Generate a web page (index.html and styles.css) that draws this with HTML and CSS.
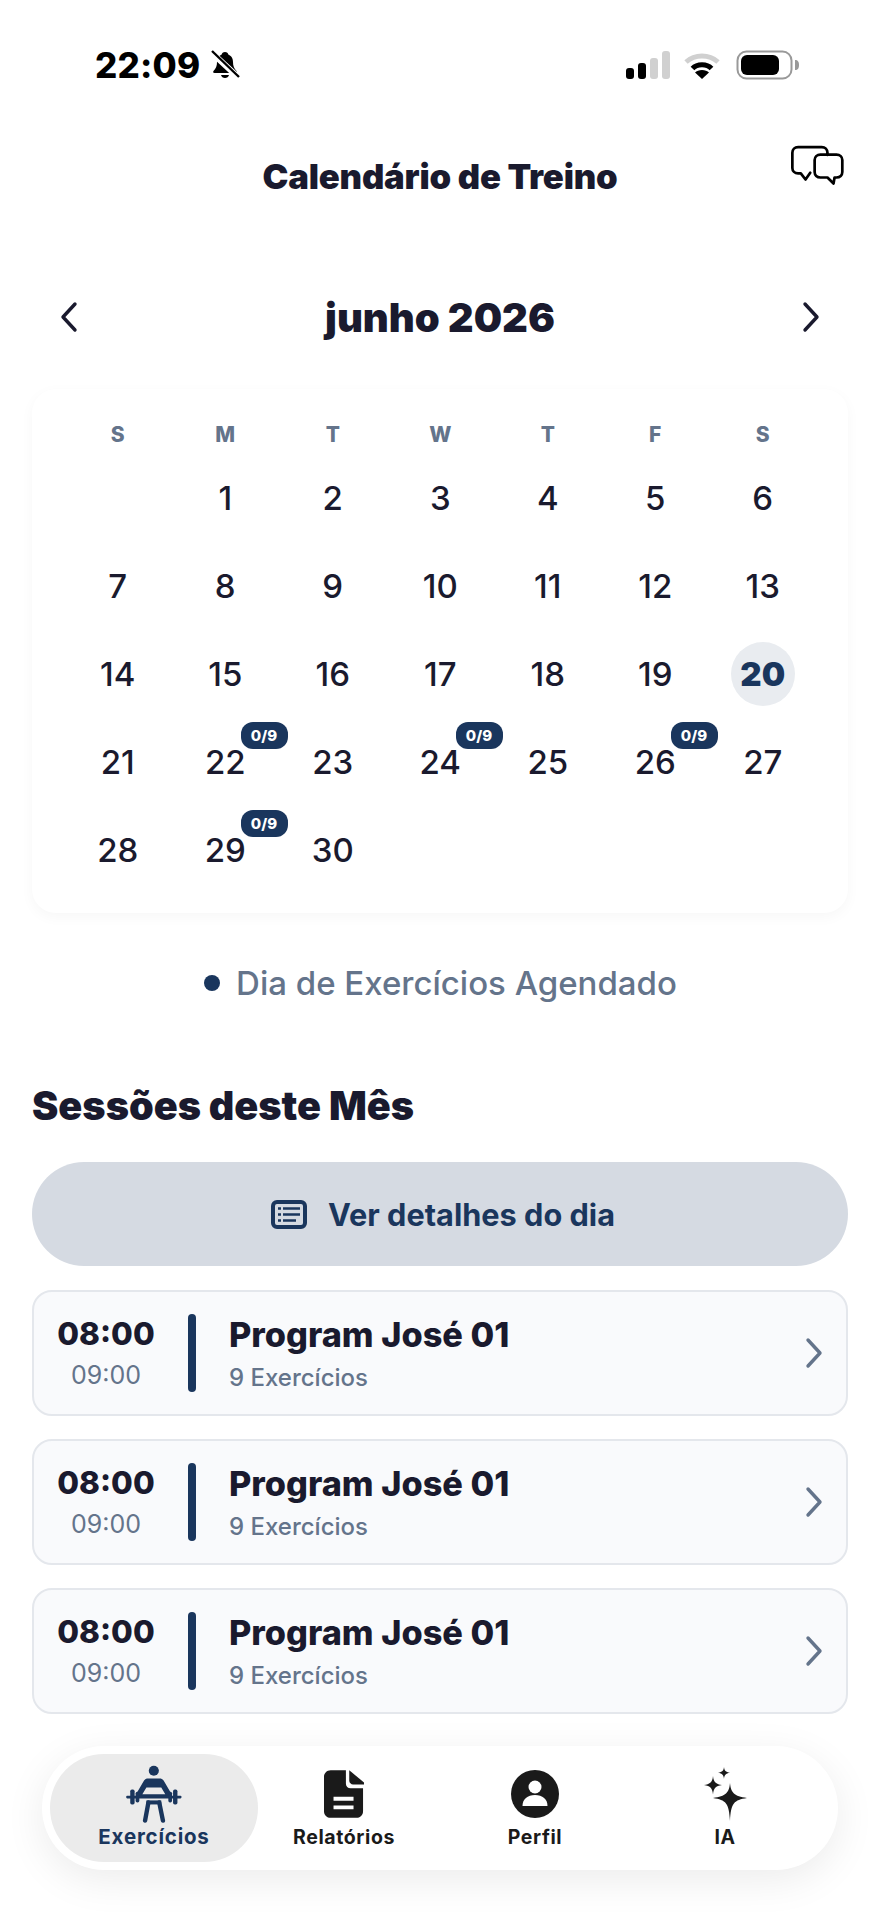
FILE: index.html
```html
<!DOCTYPE html>
<html lang="pt">
<head>
<meta charset="utf-8">
<title>Calendário de Treino</title>
<link rel="stylesheet" href="styles.css">
</head>
<body>
<div class="screen">
  <div class="status">
    <div class="status-left">
      <span class="clock">22:09</span>
      <svg class="bell" width="30" height="30" viewBox="0 0 30 30"><path d="M15 2c-2 0-3 1-3.300 2.500C8 6 7 9 7 12c0 4-1 6-3.500 9-.8 1-.2 2 1 2h21c1.200 0 1.800-1 1-2-2.500-3-3.500-5-3.500-9 0-3-1-6-4.700-7.500C18 3 17 2 15 2z" fill="#000"/><path d="M11 25h8c-.5 2-2 3-4 3s-3.500-1-4-3z" fill="#000"/><path d="M1 2l28 26" stroke="#fff" stroke-width="6"/><path d="M2 1l27 26" stroke="#000" stroke-width="2.400"/></svg>
    </div>
    <div class="status-right">
      <svg width="45" height="28" viewBox="0 0 45 28"><rect x="0" y="17" width="8" height="11" rx="3" fill="#000"/><rect x="12" y="12" width="8" height="16" rx="3" fill="#000"/><rect x="24" y="7" width="8" height="21" rx="3" fill="#d0d0d0"/><rect x="36" y="0" width="8" height="28" rx="3" fill="#d0d0d0"/></svg>
      <svg class="wifi" width="38" height="28" viewBox="0 0 38 28"><path d="M3 11C12 3 26 3 35 11" fill="none" stroke="#d0d0d0" stroke-width="5"/><path d="M9.500 17.500C14 12.500 24 12.500 28.500 17.500" fill="none" stroke="#000" stroke-width="5"/><path d="M19 28l-7-6.500C15 18 23 18 26 21.500z" fill="#000"/></svg>
      <svg class="battery" width="64" height="30" viewBox="0 0 64 30"><rect x="1.500" y="1.500" width="54" height="27" rx="9" fill="none" stroke="#999" stroke-width="2"/><rect x="5" y="5" width="38" height="20" rx="6" fill="#000"/><path d="M59 10c3 0 4 2 4 5s-1 5-4 5z" fill="#999"/></svg>
    </div>
  </div>

  <header class="topbar">
    <h1 class="title">Calendário de Treino</h1>
    <svg class="chat" width="54" height="43" viewBox="540 338 160 127"><path d="M600 426l-14 20-14-18h-8c-10 0-17-7-17-16v-45c0-10 7-17 17-17h70c10 0 17 7 17 17v6M630 372h48c10 0 17 7 17 16v36c0 9-7 16-17 16h-6l-3 18-18-18h-21c-10 0-17-7-17-16v-36c0-9 7-16 17-16z" fill="none" stroke="#000" stroke-width="8" stroke-linejoin="round" stroke-linecap="round"/></svg>
  </header>

  <div class="month">
    <svg width="20" height="32" viewBox="0 0 20 32"><path d="M16 3L4 16l12 13" fill="none" stroke="#1a1a2e" stroke-width="3.400" stroke-linecap="round" stroke-linejoin="round"/></svg>
    <h2 class="month-name">junho 2026</h2>
    <svg width="20" height="32" viewBox="0 0 20 32"><path d="M4 3l12 13L4 29" fill="none" stroke="#1a1a2e" stroke-width="3.400" stroke-linecap="round" stroke-linejoin="round"/></svg>
  </div>

  <section class="calendar">
    <div class="weekdays"><span>S</span><span>M</span><span>T</span><span>W</span><span>T</span><span>F</span><span>S</span></div>
    <div class="days">
      <span class="day"></span><span class="day">1</span><span class="day">2</span><span class="day">3</span><span class="day">4</span><span class="day">5</span><span class="day">6</span>
      <span class="day">7</span><span class="day">8</span><span class="day">9</span><span class="day">10</span><span class="day">11</span><span class="day">12</span><span class="day">13</span>
      <span class="day">14</span><span class="day">15</span><span class="day">16</span><span class="day">17</span><span class="day">18</span><span class="day">19</span><span class="day"><b class="today">20</b></span>
      <span class="day">21</span><span class="day">22<i class="badge">0/9</i></span><span class="day">23</span><span class="day">24<i class="badge">0/9</i></span><span class="day">25</span><span class="day">26<i class="badge">0/9</i></span><span class="day">27</span>
      <span class="day">28</span><span class="day">29<i class="badge">0/9</i></span><span class="day">30</span>
    </div>
  </section>

  <div class="legend"><span class="dot"></span><span>Dia de Exercícios Agendado</span></div>

  <h2 class="section-title">Sessões deste Mês</h2>

  <button class="details">
    <svg width="36" height="29" viewBox="0 0 36 29"><rect x="2" y="2" width="32" height="25" rx="4" fill="#d5dae2" stroke="#1a365d" stroke-width="4"/><path d="M7 8.500h3M12 8.500h17M7 14.500h3M12 14.500h17M7 20.500h3M12 20.500h13" stroke="#1a365d" stroke-width="2.600"/></svg>
    <span>Ver detalhes do dia</span>
  </button>

  <div class="sessions">
    <article class="session">
      <div class="times"><strong>08:00</strong><span>09:00</span></div>
      <div class="bar"></div>
      <div class="info"><strong>Program José 01</strong><span>9 Exercícios</span></div>
      <svg class="go" width="20" height="32" viewBox="0 0 20 32"><path d="M4 3l12 13L4 29" fill="none" stroke="#64748b" stroke-width="3.400" stroke-linecap="round" stroke-linejoin="round"/></svg>
    </article>
    <article class="session">
      <div class="times"><strong>08:00</strong><span>09:00</span></div>
      <div class="bar"></div>
      <div class="info"><strong>Program José 01</strong><span>9 Exercícios</span></div>
      <svg class="go" width="20" height="32" viewBox="0 0 20 32"><path d="M4 3l12 13L4 29" fill="none" stroke="#64748b" stroke-width="3.400" stroke-linecap="round" stroke-linejoin="round"/></svg>
    </article>
    <article class="session">
      <div class="times"><strong>08:00</strong><span>09:00</span></div>
      <div class="bar"></div>
      <div class="info"><strong>Program José 01</strong><span>9 Exercícios</span></div>
      <svg class="go" width="20" height="32" viewBox="0 0 20 32"><path d="M4 3l12 13L4 29" fill="none" stroke="#64748b" stroke-width="3.400" stroke-linecap="round" stroke-linejoin="round"/></svg>
    </article>
  </div>

  <nav class="tabs">
    <div class="tab active">
      <div class="icon"><svg width="56" height="58" viewBox="18 15 165 172"><circle cx="100" cy="32" r="15" fill="#1a365d"/><path fill-rule="evenodd" d="M82 55h36c5 0 8 2 11 6l23 39-6 10H54l-6-10 23-39c3-4 6-6 11-6zM78 82l-12 20h68l-12-20z" fill="#1a365d"/><rect x="18" y="106" width="164" height="8" rx="3" fill="#1a365d"/><rect x="30" y="88" width="13" height="44" rx="5" fill="#1a365d"/><rect x="46" y="94" width="11" height="32" rx="5" fill="#1a365d"/><rect x="157" y="88" width="13" height="44" rx="5" fill="#1a365d"/><rect x="143" y="94" width="11" height="32" rx="5" fill="#1a365d"/><path d="M84 126l-10 54M116 126l11 54" stroke="#1a365d" stroke-width="13" stroke-linecap="round"/><path d="M78 120h44v12H78z" fill="#1a365d"/></svg></div>
      <span>Exercícios</span>
    </div>
    <div class="tab">
      <div class="icon"><svg width="40" height="50" viewBox="0 0 42 50"><path d="M7 0h16v14c0 3 2 5 5 5h13v24c0 4-3 7-7 7H7c-4 0-7-3-7-7V7c0-4 3-7 7-7z" fill="#1a1a1a"/><path d="M23 0l18 15H27c-2 0-4-2-4-4z" fill="#1a1a1a" transform="translate(3.500 0)"/><path d="M10 30h21M10 39h21" stroke="#fff" stroke-width="4"/></svg></div>
      <span>Relatórios</span>
    </div>
    <div class="tab">
      <div class="icon"><svg width="48" height="48" viewBox="0 0 48 48"><circle cx="24" cy="24" r="24" fill="#1a1a1a"/><circle cx="24" cy="17" r="6.500" fill="#fff"/><path d="M11.500 36c0-7 5-11 12.500-11s12.500 4 12.500 11z" fill="#fff"/></svg></div>
      <span>Perfil</span>
    </div>
    <div class="tab">
      <div class="icon"><svg width="44" height="54" viewBox="0 0 44 54"><path d="M27 16c1 10 4 13 17 15-13 2-16 5-17 23-1-18-4-21-17-23 13-2 16-5 17-15z" fill="#1a1a1a"/><path d="M10 9c.6 6 2.500 8 9 9-6.500 1-8.400 3-9 9.500-.6-6.500-2.500-8.500-9-9.500 6.500-1 8.400-3 9-9z" fill="#1a1a1a"/><path d="M21 0c.4 3.500 1.500 5 6 5.800-4.500.8-5.600 2.200-6 6.200-.4-4-1.500-5.400-6-6.200 4.500-.8 5.600-2.300 6-5.800z" fill="#1a1a1a"/></svg></div>
      <span>IA</span>
    </div>
  </nav>
</div>
</body>
</html>
```
FILE: styles.css
```css
* { box-sizing: border-box; }
html, body { margin: 0; padding: 0; background: #fff; }
.screen {
  width: 880px;
  height: 1912px;
  overflow: hidden;
  font-family: Inter, "Liberation Sans", sans-serif;
  color: #1a1a2e;
  padding: 0 32px;
  display: flex;
  flex-direction: column;
}
.status {
  height: 50px;
  margin-top: 40px;
  padding: 0 0 0 63px;
  display: flex;
  justify-content: space-between;
  align-items: center;
}
.status-left { display: flex; align-items: center; gap: 10px; }
.clock { font-size: 35px; font-weight: 800; color: #000; letter-spacing: .2px; }
.status-right { display: flex; align-items: center; gap: 15px; margin-right: 48px; }
.wifi { margin-left: -3px; }
.topbar {
  position: relative;
  height: 100px;
  margin-top: 36px;
  display: flex;
  justify-content: center;
}
.title { margin: 0; font-size: 34.700px; font-weight: 900; line-height: 100px; letter-spacing: -.2px; }
.chat { position: absolute; right: 4px; top: 17px; }
.month {
  height: 64px;
  margin-top: 59px;
  padding: 0 27px 0 27px;
  display: flex;
  justify-content: space-between;
  align-items: center;
}
.month-name { margin: 0; font-size: 40px; font-weight: 900; }
.calendar {
  height: 524px;
  margin-top: 40px;
  border-radius: 24px;
  background: #fff;
  box-shadow: 0 4px 14px rgba(0, 0, 0, .035);
  padding: 24px 31px 0;
}
.weekdays, .days {
  display: grid;
  grid-template-columns: repeat(7, 107.500px);
  margin: 0 1px;
}
.weekdays { height: 41px; font-size: 21px; font-weight: 800; color: #64748b; text-align: center; line-height: 44px; }
.days { grid-auto-rows: 88px; }
.day {
  position: relative;
  display: flex;
  align-items: center;
  justify-content: center;
  font-size: 33px;
  font-weight: 500;
}
.today {
  width: 64px;
  height: 64px;
  border-radius: 50%;
  background: #e9ecf0;
  color: #1a365d;
  font-weight: 900;
  display: flex;
  align-items: center;
  justify-content: center;
}
.badge {
  position: absolute;
  left: 69px;
  top: 4px;
  width: 47px;
  height: 27px;
  border-radius: 12px;
  background: #1a365d;
  color: #fff;
  font-size: 15px;
  font-weight: 800;
  font-style: normal;
  text-align: center;
  line-height: 27px;
}
.legend {
  margin-top: 50px;
  height: 40px;
  display: flex;
  justify-content: center;
  align-items: center;
  gap: 16px;
  padding-left: 1px;
  font-size: 33px;
  font-weight: 500;
  color: #64748b;
}
.dot { width: 16px; height: 16px; border-radius: 50%; background: #1a365d; }
.section-title { margin: 79px 0 0; height: 48px; line-height: 48px; font-size: 39.600px; font-weight: 900; }
.details {
  margin-top: 32px;
  height: 104px;
  flex: none;
  border: 0;
  border-radius: 52px;
  background: #d5dae2;
  color: #1a365d;
  font: 700 30.700px Inter, "Liberation Sans", sans-serif;
  display: flex;
  align-items: center;
  justify-content: center;
  gap: 21px;
  padding: 0 0 0 6px;
}
.sessions { margin-top: 24px; display: flex; flex-direction: column; gap: 23px; }
.session {
  height: 126px;
  flex: none;
  border: 2px solid #e4e7ec;
  border-radius: 20px;
  background: #f9fafc;
  display: flex;
  align-items: center;
  padding: 0 22px 0 22px;
}
.times { width: 100px; display: flex; flex-direction: column; align-items: center; gap: 8px; }
.times strong { font-size: 31.500px; font-weight: 800; line-height: 36px; }
.times span { font-size: 25px; color: #64748b; line-height: 30px; }
.bar { width: 8px; height: 78px; border-radius: 4px; background: #1a365d; margin-left: 32px; }
.info { flex: 1; margin-left: 33px; display: flex; flex-direction: column; gap: 8px; }
.info strong { font-size: 34.300px; font-weight: 800; line-height: 42px; }
.info span { font-size: 24px; font-weight: 500; color: #64748b; line-height: 28px; }
.tabs {
  margin: 32px -22px 0 10px;
  width: 796px;
  height: 124px;
  flex: none;
  border-radius: 62px;
  background: #fff;
  box-shadow: 0 10px 40px rgba(0, 0, 0, .08);
  padding: 8px;
  display: grid;
  grid-template-columns: 208px 172px 210px 170px;
}
.tab {
  display: flex;
  flex-direction: column;
  align-items: center;
  justify-content: flex-end;
  padding-bottom: 13px;
  border-radius: 54px;
  color: #1a1a1a;
  font-size: 19.500px;
  font-weight: 700;
  letter-spacing: .6px;
  gap: 2px;
  line-height: 24px;
}
.tab.active { background: #ebebeb; color: #1a365d; font-size: 20.500px; letter-spacing: .8px; }
.icon { height: 58px; display: flex; align-items: center; }
```
